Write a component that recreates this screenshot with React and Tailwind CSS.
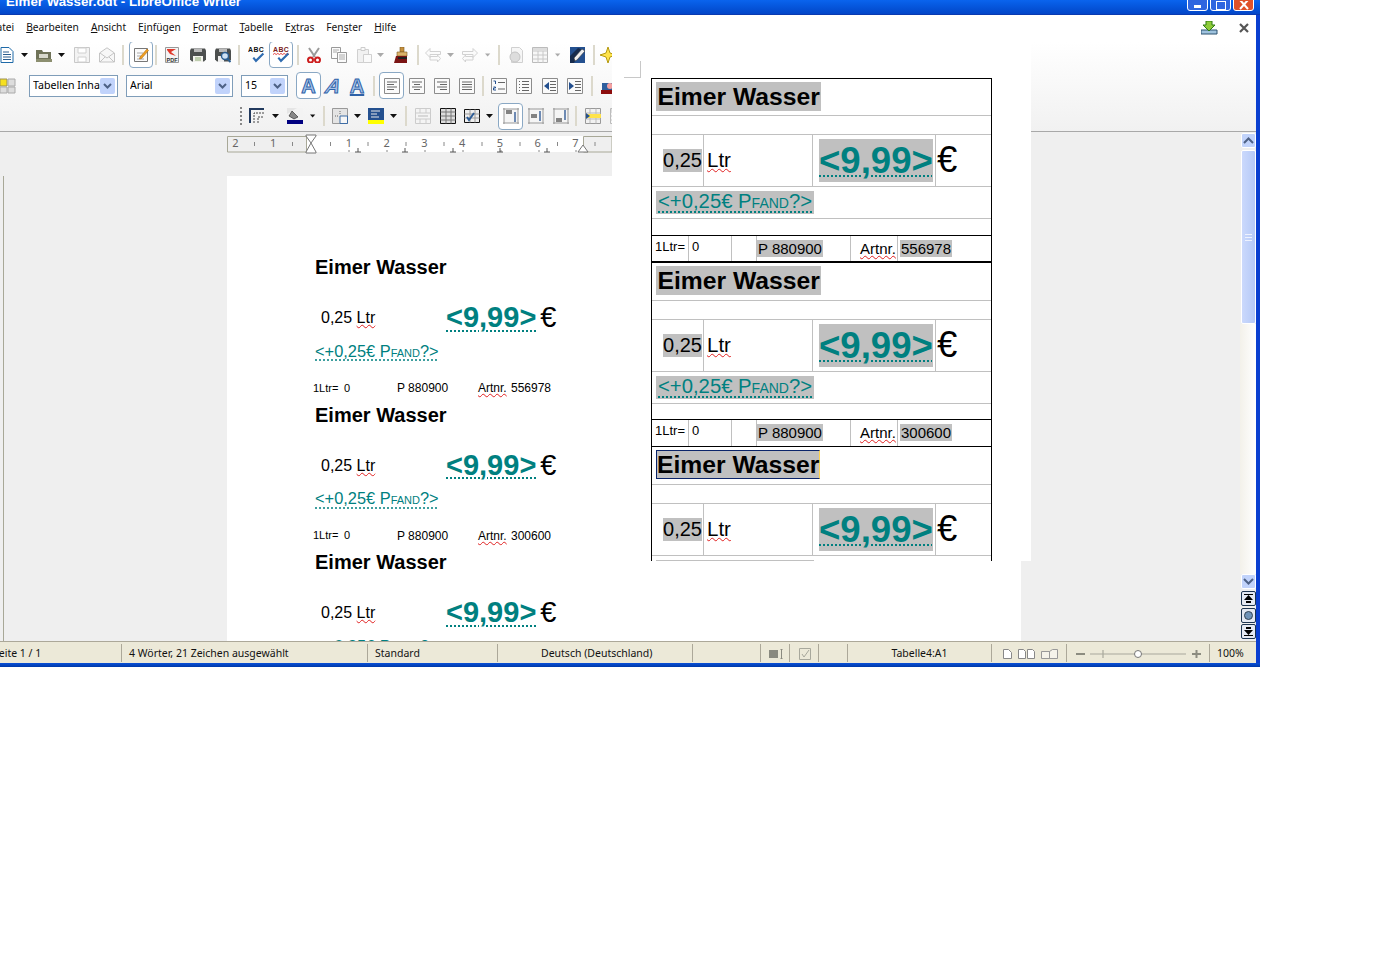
const UI = "font-['Noto_Sans','DejaVu_Sans',sans-serif]";
const DOC = "font-['Liberation_Sans',Arial,sans-serif]";

const Slot = ({ w, children }) => <div className={`${w} h-full shrink-0 flex items-center justify-center`}>{children}</div>;
const Sep = () => <div className="w-[2px] h-[20px] shrink-0 bg-[#dcd9cc]" />;
const Drop = ({ off }) => <svg width="8" height="4" viewBox="0 0 8 4"><path d="M0 0h7L3.5 4z" fill={off ? "#aaa" : "#111"} /></svg>;
const Ico = ({ children, s = 16 }) => <svg width={s} height={s} viewBox="0 0 16 16" className="shrink-0">{children}</svg>;
const Pressed = ({ w, children }) => <div className={`${w} h-[27px] shrink-0 flex items-center justify-center rounded-[4px] border border-[#8aa8c4] bg-white`}>{children}</div>;

const NewDoc = () => <Ico><path d="M2 .5h8l4 4v11H2z" fill="#fff" stroke="#1f6aa8" /><path d="M4 5h6M4 7.5h8M4 10h8M4 12.5h8" stroke="#2a5d8f" /></Ico>;
const Open = () => <Ico><path d="M0 3h6l1 2h8v10H0z" fill="#6f7258" /><path d="M3 7h9v4H3z" fill="#d8d8cc" /><path d="M0 12h16v3H0z" fill="#8c8f70" /></Ico>;
const Save = () => <Ico><path d="M.5.5h15v15H.5z" fill="#f3f3f3" stroke="#c8c8c8" /><path d="M4 1h8v5H4zM4 10h8v5H4z" fill="#fff" stroke="#d0d0d0" /></Ico>;
const Mail = () => <Ico><path d="M.5 6 8 .8 15.5 6v9H.5z" fill="#f7f7f7" stroke="#c4c4c4" /><path d="M1 6l7 5 7-5M1 15l5-5M15 15l-5-5" fill="none" stroke="#c4c4c4" /></Ico>;
const Edit = () => <Ico><path d="M1.500 1.500h13v13h-13z" fill="#fafafa" stroke="#777" /><path d="M4 6h6M4 9h4M4 12h7" stroke="#aaa" /><path d="M7 10l7-8 1.500 1.500-7 8-2 .5z" fill="#f0a020" stroke="#b06a10" strokeWidth=".6" /></Ico>;
const Pdf = () => <Ico><path d="M1.500.5h13v15h-13z" fill="#f4f4f4" stroke="#999" /><path d="M3 2h9L7 5l5 4-6-2-3-4z" fill="#e0392b" /><text x="8" y="14.500" textAnchor="middle" fontSize="5.500" fontWeight="700" fontFamily="Liberation Sans" fill="#333">PDF</text></Ico>;
const Print = () => <Ico><path d="M1 1.500h14l1 2v9l-2 2H2l-2-2v-9z" fill="#4c4f4e" /><path d="M4 2h8v3H4z" fill="#bbb" /><path d="M3 9h10v6H3z" fill="#f3f3ee" /><path d="M5 11h6M5 13h6" stroke="#8aa86f" /></Ico>;
const Preview = () => <Ico><path d="M1 1.500h14l1 2v9l-2 2H2l-2-2v-9z" fill="#4c4f4e" /><path d="M4 2h8v3H4z" fill="#bbb" /><path d="M3 9h6v6H3z" fill="#eee" /><circle cx="10" cy="9" r="3.500" fill="#cfe2f5" stroke="#2b5e91" strokeWidth="1.400" /><path d="M12.500 11.500 15.500 15" stroke="#2b5e91" strokeWidth="2" /></Ico>;
const Abc = ({ wave }) => <Ico s={17}><text x="0" y="6" fontSize="6.500" fontWeight="700" fontFamily="Liberation Sans" letterSpacing=".4" fill={wave ? "#7a2020" : "#111"}>ABC</text>{wave && <path d="M0 8l1.500-1 1.500 1 1.500-1 1.500 1 1.500-1 1.500 1 1.500-1 1.500 1 1.500-1 1.500 1" fill="none" stroke="#d22" strokeWidth=".8" />}<path d="M5 11l2.500 3 7-7" fill="none" stroke="#2f6cb0" strokeWidth="2" /></Ico>;
const Cut = () => <Ico><path d="M3 1l6 9M13 1L7 10" stroke="#9a9a9a" strokeWidth="2" /><circle cx="4.500" cy="13" r="2.500" fill="#fff" stroke="#cc1d1d" strokeWidth="2" /><circle cx="11.500" cy="13" r="2.500" fill="#fff" stroke="#cc1d1d" strokeWidth="2" /></Ico>;
const Copy = () => <Ico><path d="M.5.5h9v11h-9z" fill="#fbfbfb" stroke="#999" /><path d="M6.500 5.500h9v10h-9z" fill="#fbfbfb" stroke="#999" /><path d="M2 3h6M2 5h4M8 8h6M8 10h6M8 12h6" stroke="#aaa" /></Ico>;
const Paste = () => <Ico><path d="M1.500 2.500h11v13h-11z" fill="#f1f1f1" stroke="#d0d0d0" /><path d="M5 .5h4v3H5z" fill="#fafafa" stroke="#ccc" /><path d="M7.500 7.500h8v8h-8z" fill="#fafafa" stroke="#d0d0d0" /></Ico>;
const Brush = () => <Ico><path d="M6 0h4v5H6z" fill="#c58f3c" stroke="#7d5a22" strokeWidth=".6" /><path d="M3 5h10v4H3z" fill="#dcb36a" stroke="#7d5a22" strokeWidth=".6" /><path d="M2 9h11v7H0z" fill="#7b1414" /><path d="M4 10h9v2H4z" fill="#222" /></Ico>;
const UndoI = ({ flip }) => <Ico><g transform={flip ? "matrix(-1 0 0 1 16 0)" : undefined}><path d="M.5 6 5 1.500v3h10.500v3H5v3zM5 9.500h7.500V8l3 3.500-3 3.500v-2H5z" fill="#fbfbfb" stroke="#d2d2d2" /></g></Ico>;
const NavI = () => <Ico><path d="M3.500.5h8l3 3v12h-11z" fill="#f6f6f6" stroke="#d0d0d0" /><circle cx="7" cy="10" r="5" fill="#ddd" stroke="#c4c4c4" /></Ico>;
const GridOff = () => <Ico><path d="M.5.5h15v15H.5z" fill="#f7f7f7" stroke="#bbb" /><path d="M.5 4h15M.5 8h15M.5 12h15M6 4v12M11 4v12" stroke="#c8c8c8" /><path d="M1 1h14v3H1z" fill="#ddd" /></Ico>;
const Draw = () => <Ico><path d="M1 0h15v16H1z" fill="#24508f" /><path d="M1 16V9L9 1l3 1-7 14z" fill="#162b4d" /><path d="M6 14l-1-3 8-9 3 2-8 9z" fill="#efefef" stroke="#333" strokeWidth=".6" /></Ico>;
const Star = () => <Ico><path d="M8 0l2 6 6 2-6 2-2 6-2-6-6-2 6-2z" fill="#ffe34a" stroke="#b59a10" /></Ico>;
const Tiles = () => <Ico><path d="M0 1h7v7H0z" fill="#f6e020" stroke="#9c9154" /><path d="M8 1h7v7H8zM0 9h7v6H0zM8 9h7v6H8z" fill="#ddd" stroke="#aaa" /></Ico>;
const Lines = ({ d }) => <Ico><path d="M.5.5h15v15H.5z" fill="#fafafa" stroke="#8c8c8c" /><path d={d} stroke="#666" /></Ico>;
const ListI = ({ d, blue }) => <Ico><path d="M.5.5h15v15H.5z" fill="#fafafa" stroke="#8c8c8c" /><path d={d} stroke="#666" />{blue}</Ico>;
const Camera = () => <Ico><path d="M1 5h14v7H1z" fill="#2f5f9e" /><circle cx="9" cy="8" r="3" fill="#f4a0a0" /><path d="M0 12h16v4H0z" fill="#8c0d0d" /></Ico>;

const Borders = () => <Ico><path d="M1 15V1h14" fill="none" stroke="#223a5e" strokeWidth="2" /><path d="M5 15V5h10M9 15V9h6" fill="none" stroke="#444" strokeDasharray="2 1" /></Ico>;
const Fill = () => <Ico><path d="M0 0h16v12H0z" fill="#f3f3f3" /><path d="M0 0h10L0 6z" fill="#e5e5e5" /><path d="M5 3l6 6-4 2-5-3z" fill="#888" stroke="#222" strokeWidth=".6" /><path d="M0 12h16v4H0z" fill="#000080" /></Ico>;
const Split = () => <Ico><path d="M.5.5h15v15H.5z" fill="#e4e4e4" stroke="#999" /><path d="M8 8h7.500v7.500H8z" fill="#f6f6f6" stroke="#3d6ca5" /><path d="M3 8h4M8 3v4" stroke="#666" strokeDasharray="1 1" /></Ico>;
const Shade = () => <Ico><path d="M0 0h16v12H0z" fill="#24508f" /><path d="M3 3h9M3 6h6M3 9h8" stroke="#e8e8e8" /><path d="M0 12h16v4H0z" fill="#ffff00" /></Ico>;
const Dist = () => <Ico><path d="M.5.5h15v15H.5z" fill="#f4f4f4" stroke="#ccc" /><path d="M.5 5h15M.5 11h15M5 .5V5M11 .5V5M5 11v4.500M11 11v4.500" stroke="#ccc" /><path d="M3 8h10" stroke="#bbb" /></Ico>;
const Tbl = () => <Ico><path d="M.5.5h15v15H.5z" fill="#ddd" stroke="#111" /><path d="M.5 4h15M.5 8h15M.5 12h15M6 .5v15M11 .5v15" stroke="#777" /></Ico>;
const TblCheck = () => <Ico><path d="M.5 1.500h15v13H.5z" fill="#eee" stroke="#111" /><path d="M.5 6h15M.5 10h15M6 1.500v13M11 1.500v13" stroke="#999" /><path d="M3 9l2 3 5-7" fill="none" stroke="#2d5c96" strokeWidth="2" /></Ico>;
const VAlign = ({ kind }) => (
  <Ico>
    <path d="M1 1h14v14H1z" fill="#f5f5f5" />
    <path d="M0 1h16M0 15h16M1 0v16M15 0v16" stroke="#999" />
    {kind === "top" && <><path d="M3 3h6M3 5h6" stroke="#111" /><path d="M12 4v10" stroke="#24508f" strokeWidth="1.300" /></>}
    {kind === "mid" && <><path d="M3 7h6M3 9h6" stroke="#111" /><path d="M12 3v10" stroke="#24508f" strokeWidth="1.300" /></>}
    {kind === "bot" && <><path d="M3 11h6M3 13h6" stroke="#111" /><path d="M12 2v10" stroke="#24508f" strokeWidth="1.300" /></>}
  </Ico>
);
const InsRow = () => <Ico><path d="M.5.5h15v15H.5z" fill="#f2f2f2" stroke="#999" /><path d="M.5 5h15M.5 11h15M5 .5v15M11 .5v15" stroke="#bbb" /><path d="M2 6h14v4H2z" fill="#ffe34a" /><path d="M1 5l4 3-4 3z" fill="#24508f" /></Ico>;

const BigA = ({ cls }) => <span className={`${DOC} inline-block text-[20px] leading-none font-bold text-[#a8c4ea] [-webkit-text-stroke:1px_#2f62a8] ${cls}`}>A</span>;

const Combo = ({ w, label }) => (
  <div className={`${w} h-[22px] shrink-0 border border-[#7f9db9] bg-white flex items-center justify-between pl-[3px] pr-[2px] text-[10.600px] text-black overflow-hidden whitespace-nowrap`}>
    <span className="overflow-hidden">{label}</span>
    <span className="w-[15px] h-[16px] shrink-0 rounded-[2px] bg-[#c1d3fb] flex items-center justify-center">
      <svg width="9" height="6" viewBox="0 0 9 6"><path d="M1 1l3.500 3.500L8 1" fill="none" stroke="#4d6185" strokeWidth="2" /></svg>
    </span>
  </div>
);

const Row1 = () => (
  <div className="h-[28px] pb-[3px] flex items-center -ml-[5px]">
    <Slot w="w-[24px]"><NewDoc /></Slot>
    <Slot w="w-[12px]"><Drop /></Slot>
    <Slot w="w-[26px]"><Open /></Slot>
    <Slot w="w-[10px]"><Drop /></Slot>
    <Slot w="w-[30px]"><Save /></Slot>
    <Slot w="w-[20px]"><Mail /></Slot>
    <Slot w="w-[12px]"><Sep /></Slot>
    <Pressed w="w-[24px]"><Edit /></Pressed>
    <Slot w="w-[6px]"><Sep /></Slot>
    <Slot w="w-[26px]"><Pdf /></Slot>
    <Slot w="w-[26px]"><Print /></Slot>
    <Slot w="w-[24px]"><Preview /></Slot>
    <Slot w="w-[8px]"><Sep /></Slot>
    <Slot w="w-[26px]"><Abc /></Slot>
    <Pressed w="w-[24px]"><Abc wave /></Pressed>
    <Slot w="w-[10px]"><Sep /></Slot>
    <Slot w="w-[22px]"><Cut /></Slot>
    <Slot w="w-[28px]"><Copy /></Slot>
    <Slot w="w-[22px]"><Paste /></Slot>
    <Slot w="w-[12px]"><Drop off /></Slot>
    <Slot w="w-[30px]"><Brush /></Slot>
    <Sep />
    <Slot w="w-[28px]"><UndoI /></Slot>
    <Slot w="w-[8px]"><Drop off /></Slot>
    <Slot w="w-[30px]"><UndoI flip /></Slot>
    <Slot w="w-[6px]"><Drop off /></Slot>
    <Slot w="w-[16px]"><Sep /></Slot>
    <Slot w="w-[18px]"><NavI /></Slot>
    <Slot w="w-[30px]"><GridOff /></Slot>
    <Slot w="w-[6px]"><Drop off /></Slot>
    <Slot w="w-[32px]"><Draw /></Slot>
    <Sep />
    <Slot w="w-[26px]"><Star /></Slot>
  </div>
);

const Row2 = () => (
  <div className="h-[31px] flex items-center">
    <Slot w="w-[16px]"><Tiles /></Slot>
    <div className="w-[13px] shrink-0" />
    <Combo w="w-[89px]" label="Tabellen Inhalt" />
    <div className="w-[8px] shrink-0" />
    <Combo w="w-[107px]" label="Arial" />
    <div className="w-[8px] shrink-0" />
    <Combo w="w-[47px]" label="15" />
    <div className="w-[8px] shrink-0" />
    <Pressed w="w-[25px]"><BigA /></Pressed>
    <Slot w="w-[24px]"><BigA cls="italic -skew-x-12" /></Slot>
    <Slot w="w-[24px]"><BigA cls="underline" /></Slot>
    <Slot w="w-[10px]"><Sep /></Slot>
    <Pressed w="w-[25px]"><Lines d="M3 4h10M3 6.500h7M3 9h10M3 11.500h7" /></Pressed>
    <Slot w="w-[25px]"><Lines d="M3 4h10M5 6.500h6M3 9h10M5 11.500h6" /></Slot>
    <Slot w="w-[25px]"><Lines d="M3 4h10M6 6.500h7M3 9h10M6 11.500h7" /></Slot>
    <Slot w="w-[25px]"><Lines d="M3 4h10M3 6.500h10M3 9h10M3 11.500h10" /></Slot>
    <Slot w="w-[8px]"><Sep /></Slot>
    <Slot w="w-[24px]"><ListI d="M7 4.500h7M7 11h7" blue={<path d="M2.500 3h2v3M2.500 9h2v1h-2v2h2.500" fill="none" stroke="#24508f" />} /></Slot>
    <Slot w="w-[26px]"><ListI d="M6 3.500h7M6 6.500h7M6 9.500h7M6 12.500h7M3 3.500h1M3 6.500h1M3 9.500h1M3 12.500h1" /></Slot>
    <Slot w="w-[25px]"><ListI d="M8 3.500h6M8 6.500h6M8 9.500h6M8 12.500h6" blue={<path d="M7 4v8L2 8z" fill="#24508f" />} /></Slot>
    <Slot w="w-[25px]"><ListI d="M8 3.500h6M8 6.500h6M8 9.500h6M8 12.500h6" blue={<path d="M2 4v8l5-4z" fill="#24508f" />} /></Slot>
    <Slot w="w-[9px]"><Sep /></Slot>
    <Slot w="w-[25px]"><Camera /></Slot>
  </div>
);

const Row3 = () => (
  <div className="h-[30px] flex items-center pl-[240px]">
    <div className="w-[2px] h-[18px] shrink-0 border-l-2 border-dotted border-[#888]" />
    <Slot w="w-[30px]"><Borders /></Slot>
    <Slot w="w-[8px]"><Drop /></Slot>
    <Slot w="w-[30px]"><Fill /></Slot>
    <Slot w="w-[6px]"><Drop /></Slot>
    <Slot w="w-[16px]"><Sep /></Slot>
    <Slot w="w-[16px]"><Split /></Slot>
    <Slot w="w-[19px]"><Drop /></Slot>
    <Slot w="w-[18px]"><Shade /></Slot>
    <Slot w="w-[18px]"><Drop /></Slot>
    <Slot w="w-[6px]"><Sep /></Slot>
    <Slot w="w-[28px]"><Dist /></Slot>
    <Slot w="w-[22px]"><Tbl /></Slot>
    <Slot w="w-[26px]"><TblCheck /></Slot>
    <Slot w="w-[10px]"><Drop /></Slot>
    <div className="w-[3px] shrink-0" />
    <Pressed w="w-[25px]"><VAlign kind="top" /></Pressed>
    <Slot w="w-[25px]"><VAlign kind="mid" /></Slot>
    <Slot w="w-[25px]"><VAlign kind="bot" /></Slot>
    <Slot w="w-[6px]"><Sep /></Slot>
    <Slot w="w-[28px]"><InsRow /></Slot>
    <Slot w="w-[22px]"><GridOff /></Slot>
  </div>
);

const Menu = () => (
  <div className={`${UI} h-[27px] flex items-center gap-[12px] -ml-[11px] pb-[2px] text-[10.200px] text-[#111] whitespace-nowrap`}>
    <span><u>D</u>atei</span>
    <span><u>B</u>earbeiten</span>
    <span><u>A</u>nsicht</span>
    <span>E<u>i</u>nfügen</span>
    <span><u>F</u>ormat</span>
    <span><u>T</u>abelle</span>
    <span>E<u>x</u>tras</span>
    <span>Fen<u>s</u>ter</span>
    <span><u>H</u>ilfe</span>
    <div className="flex-1" />
    <svg width="17" height="14" viewBox="0 0 17 14" className="mr-[9px]">
      <path d="M0 9h16v4H0z" fill="#9fc3de" stroke="#2d5270" />
      <path d="M5 0h6v4h3l-6 6-6-6h3z" fill="#8ecb3a" stroke="#2d7a10" />
    </svg>
    <svg width="10" height="10" viewBox="0 0 10 10" className="mr-[7px]"><path d="M1 1l8 8M9 1l-8 8" stroke="#555" strokeWidth="2.200" /></svg>
  </div>
);

const WinBtn = ({ red, children }) => (
  <div className={`w-[21px] h-[12px] -mt-[1px] rounded-b-[3px] border border-white flex items-center justify-center ${red ? "bg-[#e0522a]" : "bg-[#2f66e0]"}`}>{children}</div>
);

const TitleBar = () => (
  <div className="h-[15px] flex items-start bg-linear-to-b from-[#0a64ee] to-[#0346c8] border-b border-[#0a3ab0] overflow-hidden">
    <span className="ml-[6px] -mt-[6px] font-['Liberation_Sans',sans-serif] text-[13.300px] leading-[16px] font-bold text-white whitespace-nowrap">Eimer Wasser.odt - LibreOffice Writer</span>
    <div className="flex-1" />
    <div className="flex gap-[2px] mr-[6px]">
      <WinBtn><span className="w-[7px] h-[3px] mt-[3px] bg-white" /></WinBtn>
      <WinBtn><span className="w-[10px] h-[9px] border border-white" /></WinBtn>
      <WinBtn red>
        <svg width="10" height="9" viewBox="0 0 10 9"><path d="M1-1l8 9M9-1L1 8" stroke="#fff" strokeWidth="2" /></svg>
      </WinBtn>
    </div>
  </div>
);

const Ruler = () => (
  <div className="relative ml-[227px] mt-[4px] w-[385px] h-[16px] bg-white text-[#666]">
    <svg width="385" height="18" viewBox="0 0 385 18" className="absolute left-0 top-0 overflow-visible">
      <path d="M.5.500h79v15.500H.500z" fill="#efefef" stroke="#a8a897" />
      <path d="M385 .500H356.500V16H385z" fill="#efefef" stroke="#a8a897" />
      <path d="M27.500 6v4M65.500 6v4M103.500 6v4M141 6v4M179 6v4M217 6v4M255 6v4M293 6v4M330.500 6v4M368 6v4" stroke="#888" />
      <path d="M122 14v2M160 14v2M198 14v2M236 14v2M274 14v2M312 14v2M349 14v2" stroke="#888" />
      <path d="M131 12v4M128 16h6M178 12v4M175 16h6M226 12v4M223 16h6M273 12v4M270 16h6M320 12v4M317 16h6" stroke="#555" />
      <path d="M79-1h10v1l-5 7 5 9v1H79v-1l5-9-5-7z" fill="#fff" stroke="#777" />
      <path d="M351 16l5-7 5 7z" fill="#fff" stroke="#777" />
    </svg>
    <div className={`${UI} relative -ml-[1px] flex h-[13px] items-center text-[11px] leading-none`}>
      {["2", "", "1", "", "", "", "1", "", "2", "", "3", "", "4", "", "5", "", "6", "", "7"].map((n, i) => (
        <span key={i} className="w-[18.900px] shrink-0 text-center">{n}</span>
      ))}
    </div>
  </div>
);

const Wave = ({ children }) => <span className="underline decoration-wavy decoration-[#e02020] decoration-[1px] underline-offset-[1px]">{children}</span>;

const DocBlock = ({ art }) => (
  <div className={`${DOC} h-[147.500px] text-black`}>
    <div className="h-[36px] flex items-center text-[20px] font-bold whitespace-nowrap">Eimer Wasser</div>
    <div className="h-[40px] mt-[13px] flex items-center ml-[6px] whitespace-nowrap">
      <span className="w-[125px] text-[16px]">0,25 <Wave>Ltr</Wave></span>
      <span className="text-[29px] font-bold text-[#008080] underline decoration-dotted decoration-[2px] underline-offset-[3px]">&lt;9,99&gt;</span>
      <span className="ml-[4px] text-[29px]">€</span>
    </div>
    <div className="h-[20px] mt-[3px] flex items-center text-[16.400px] [font-variant:small-caps] text-[#008080] underline decoration-dotted underline-offset-[3px] whitespace-nowrap">&lt;+0,25€ Pfand?&gt;</div>
    <div className="h-[16px] mt-[19px] -ml-[2px] flex items-center text-[12px] whitespace-nowrap">
      <span className="w-[31px] text-[11px]">1Ltr=</span>
      <span className="w-[53px] text-[11px]">0</span>
      <span className="w-[81px]">P 880900</span>
      <span className="w-[33px]"><Wave>Artnr.</Wave></span>
      <span>{art}</span>
    </div>
  </div>
);

const Hl = ({ cls, children }) => <span className={`bg-[#c0c0c0] ${cls}`}>{children}</span>;

const TableBlock = ({ art, first, selected }) => (
  <div className={`${DOC} text-black`}>
    <div className={`${first ? "h-[37px]" : "h-[38px]"} border-b border-[#c0c0c0] pl-[4px] pt-[3px]`}>
      <span className={`block w-fit h-[29px] bg-[#c0c0c0] text-[24.700px] font-bold whitespace-nowrap ${selected ? "border border-[#0a246a] border-r-[#ffd34d] leading-[28px]" : "px-[1.500px] leading-[30px]"}`}>Eimer Wasser</span>
    </div>
    <div className="h-[19px] border-b border-[#c0c0c0]" />
    <div className="h-[52px] border-b border-[#c0c0c0] flex">
      <div className="w-[52px] border-r border-[#c0c0c0] flex items-center justify-end pr-[1px]">
        <Hl cls="h-[23px] text-[20px] leading-[22px]">0,25</Hl>
      </div>
      <div className="w-[109px] border-r border-[#c0c0c0] flex items-center pl-[3px] text-[20.500px]"><Wave>Ltr</Wave></div>
      <div className="w-[123px] border-r border-[#c0c0c0] pl-[6px] pt-[4px]">
        <span className="block w-fit h-[43px] bg-[#c0c0c0] text-[36.600px] leading-[43px] font-bold text-[#008080] underline decoration-dotted decoration-[2px] underline-offset-[2px] whitespace-nowrap">&lt;9,99&gt;</span>
      </div>
      <div className="flex-1 flex items-center pl-[1px] text-[36.500px] leading-none">€</div>
    </div>
    <div className="h-[32px] border-b border-[#c0c0c0] pl-[4px] pt-[4px]">
      <span className="block w-fit h-[23px] bg-[#c0c0c0] px-[2px] text-[20.300px] leading-[21px] [font-variant:small-caps] text-[#008080] underline decoration-dotted underline-offset-[3px] whitespace-nowrap">&lt;+0,25€ Pfand?&gt;</span>
    </div>
    <div className={`${first ? "h-[17px]" : "h-[16px]"} border-b border-black`} />
    <div className={`h-[27px] flex border-black ${first ? "border-b-2" : "border-b"}`}>
      <div className="w-[37px] border-r border-[#c0c0c0] pl-[3px] pt-[3px] text-[13px] leading-[16px]">1Ltr=</div>
      <div className="w-[43px] border-r border-[#c0c0c0] pl-[3px] pt-[3px] text-[13px] leading-[16px]">0</div>
      <div className="w-[25px] border-r border-[#c0c0c0]" />
      <div className="w-[94px] border-r border-[#c0c0c0] pt-[4px] text-[15px] leading-[17px]"><Hl cls="inline-block h-[17px] px-[1px]">P 880900</Hl></div>
      <div className="w-[47px] border-r border-[#c0c0c0] pl-[9px] pt-[4px] text-[15px] leading-[17px] whitespace-nowrap"><Wave>Artnr.</Wave></div>
      <div className="flex-1 pl-[2px] pt-[4px] text-[15px] leading-[17px]"><Hl cls="inline-block h-[17px] px-[1px]">{art}</Hl></div>
    </div>
  </div>
);

const PastedPanel = () => (
  <div className="absolute left-[612px] top-[42px] w-[419px] h-[519px] bg-white overflow-hidden">
    <div className="ml-[12px] mt-[19px] w-[17px] h-[17px] border-r border-b border-[#c8c8c8]" />
    <div className="absolute left-[39px] top-[36px] w-[341px] border-x border-t border-black">
      <TableBlock first art="556978" />
      <TableBlock art="300600" />
      <TableBlock art="300600" selected />
    </div>
  </div>
);

const ScrollBtn = ({ d }) => (
  <div className="h-[15px] rounded-[2px] border border-white bg-[#c1d3fb] flex items-center justify-center">
    <svg width="11" height="7" viewBox="0 0 11 7"><path d={d} fill="none" stroke="#4d6185" strokeWidth="2" /></svg>
  </div>
);

const NavBtn = ({ children }) => (
  <div className="h-[15px] rounded-[2px] border border-[#1c3450] bg-[#e4e9f3] flex items-center justify-center">{children}</div>
);

const Scrollbar = () => (
  <div className="w-[16px] shrink-0 pt-[1px] pb-[2px] pl-[1px] flex flex-col bg-[#efefef]">
    <ScrollBtn d="M1 6l4.500-4.500L10 6" />
    <div className="h-[174px] mt-[2px] rounded-[2px] border border-white bg-linear-to-r from-[#cbd9fc] to-[#b5c9f7] flex items-center justify-center">
      <div className="w-[7px] h-[7px] border-y border-[#eef2fe] flex items-center"><div className="w-full h-[1px] bg-[#eef2fe]" /></div>
    </div>
    <div className="flex-1 -ml-[1px] bg-linear-to-r from-[#f3f1ea] to-white" />
    <ScrollBtn d="M1 1l4.500 4.500L10 1" />
    <div className="mt-[2px] flex flex-col gap-[1.500px]">
      <NavBtn><svg width="9" height="9" viewBox="0 0 9 9"><path d="M0 1h9V0H0zM4.500 1 0 6h9zM2 7h5v2H2z" fill="#000" /></svg></NavBtn>
      <NavBtn><svg width="9" height="9" viewBox="0 0 9 9"><circle cx="4.500" cy="4.500" r="4" fill="#6f93b8" stroke="#345" /></svg></NavBtn>
      <NavBtn><svg width="9" height="9" viewBox="0 0 9 9"><path d="M2 0h5v2H2zM0 3h9L4.500 8zM0 8h9v1H0z" fill="#000" /></svg></NavBtn>
    </div>
  </div>
);

const StatusCell = ({ w, cls = "", children }) => (
  <div className={`${w} shrink-0 h-full flex items-center ${cls}`}>
    <div className="flex-1 min-w-0 pt-[3px] flex items-center whitespace-nowrap">{children}</div>
    <div className="w-[1px] h-[18px] bg-[#aca899]" />
  </div>
);

const StatusBar = () => (
  <div className={`${UI} h-[22px] flex items-center bg-[#ece9d8] border-t border-[#aca899] text-[10.500px] text-[#111]`}>
    <StatusCell w="w-[122px]"><span className="-ml-[7px]">Seite 1 / 1</span></StatusCell>
    <StatusCell w="w-[246px]"><span className="ml-[7px]">4 Wörter, 21 Zeichen ausgewählt</span></StatusCell>
    <StatusCell w="w-[130px]"><span className="ml-[7px]">Standard</span></StatusCell>
    <StatusCell w="w-[195px]"><span className="ml-[43px]">Deutsch (Deutschland)</span></StatusCell>
    <StatusCell w="w-[68px]" />
    <StatusCell w="w-[29px]">
      <svg width="14" height="10" viewBox="0 0 14 10" className="ml-[8px]"><path d="M0 1h9v8H0z" fill="#8a8a80" /><path d="M11 0h3M12.500 0v10M11 10h3" stroke="#8a8a80" /></svg>
    </StatusCell>
    <StatusCell w="w-[29px]">
      <svg width="12" height="12" viewBox="0 0 12 12" className="ml-[9px]"><path d="M.5.500h11v11H.5z" fill="none" stroke="#a8a89c" /><path d="M3 6l2 3 5-7" fill="none" stroke="#a8a89c" /></svg>
    </StatusCell>
    <StatusCell w="w-[29px]" />
    <StatusCell w="w-[144px]"><span className="w-full text-center">Tabelle4:A1</span></StatusCell>
    <StatusCell w="w-[75px]">
      <div className="ml-[11px] flex items-center gap-[6px]">
        <svg width="9" height="10" viewBox="0 0 9 10"><path d="M.5.500h5l3 3v6h-8z" fill="#fff" stroke="#888" /></svg>
        <svg width="17" height="10" viewBox="0 0 17 10"><path d="M.5.500h5l2 2v7h-7zM9.500.500h5l2 2v7h-7z" fill="#fff" stroke="#888" /></svg>
        <svg width="17" height="10" viewBox="0 0 17 10"><path d="M.5 2.500h8v7h-8zM8.500 2.500l3-2h5v9h-8z" fill="#f5f3ea" stroke="#999" /></svg>
      </div>
    </StatusCell>
    <StatusCell w="w-[143px]">
      <svg width="125" height="12" viewBox="0 0 125 12" className="ml-[9px]">
        <path d="M0 6h9M116 6h9M120.500 2v8" stroke="#8c8c80" strokeWidth="2" />
        <path d="M14 6h96M27 2v8" stroke="#a8a89c" strokeWidth="1.200" />
        <circle cx="62" cy="6" r="3.500" fill="#fff" stroke="#777" />
      </svg>
    </StatusCell>
    <div className="ml-[7px] pt-[3px]">100%</div>
  </div>
);

export default function App() {
  return (
    <div className="relative w-[1375px] h-[964px] bg-white overflow-hidden">
      <div className="w-[1260px] h-[667px] flex flex-col overflow-hidden">
        <TitleBar />
        <div className="flex-1 min-h-0 flex flex-col border-r-4 border-[#0a3fd0]">
          <Menu />
          <div className={`${UI} h-[90px] bg-linear-to-b from-white to-[#f1f1f1] border-b border-[#a8a8a8] overflow-hidden`}>
            <Row1 />
            <Row2 />
            <Row3 />
          </div>
          <div className="h-[509px] flex bg-[#efefef] overflow-hidden">
            <div className="w-[1240px] shrink-0 flex flex-col">
              <Ruler />
              <div className="mt-[24px] flex-1 min-h-0 flex">
                <div className="w-[4px] border-r border-[#a8a897]" />
                <div className="ml-[223px] w-[794px] bg-white pt-[73px] pl-[88px] overflow-hidden">
                  <DocBlock art="556978" />
                  <DocBlock art="300600" />
                  <DocBlock art="300600" />
                </div>
              </div>
            </div>
            <Scrollbar />
          </div>
          <StatusBar />
        </div>
        <div className="h-[4px] bg-linear-to-b from-[#0a50d8] to-[#0039a8]" />
      </div>
      <PastedPanel />
    </div>
  );
}
